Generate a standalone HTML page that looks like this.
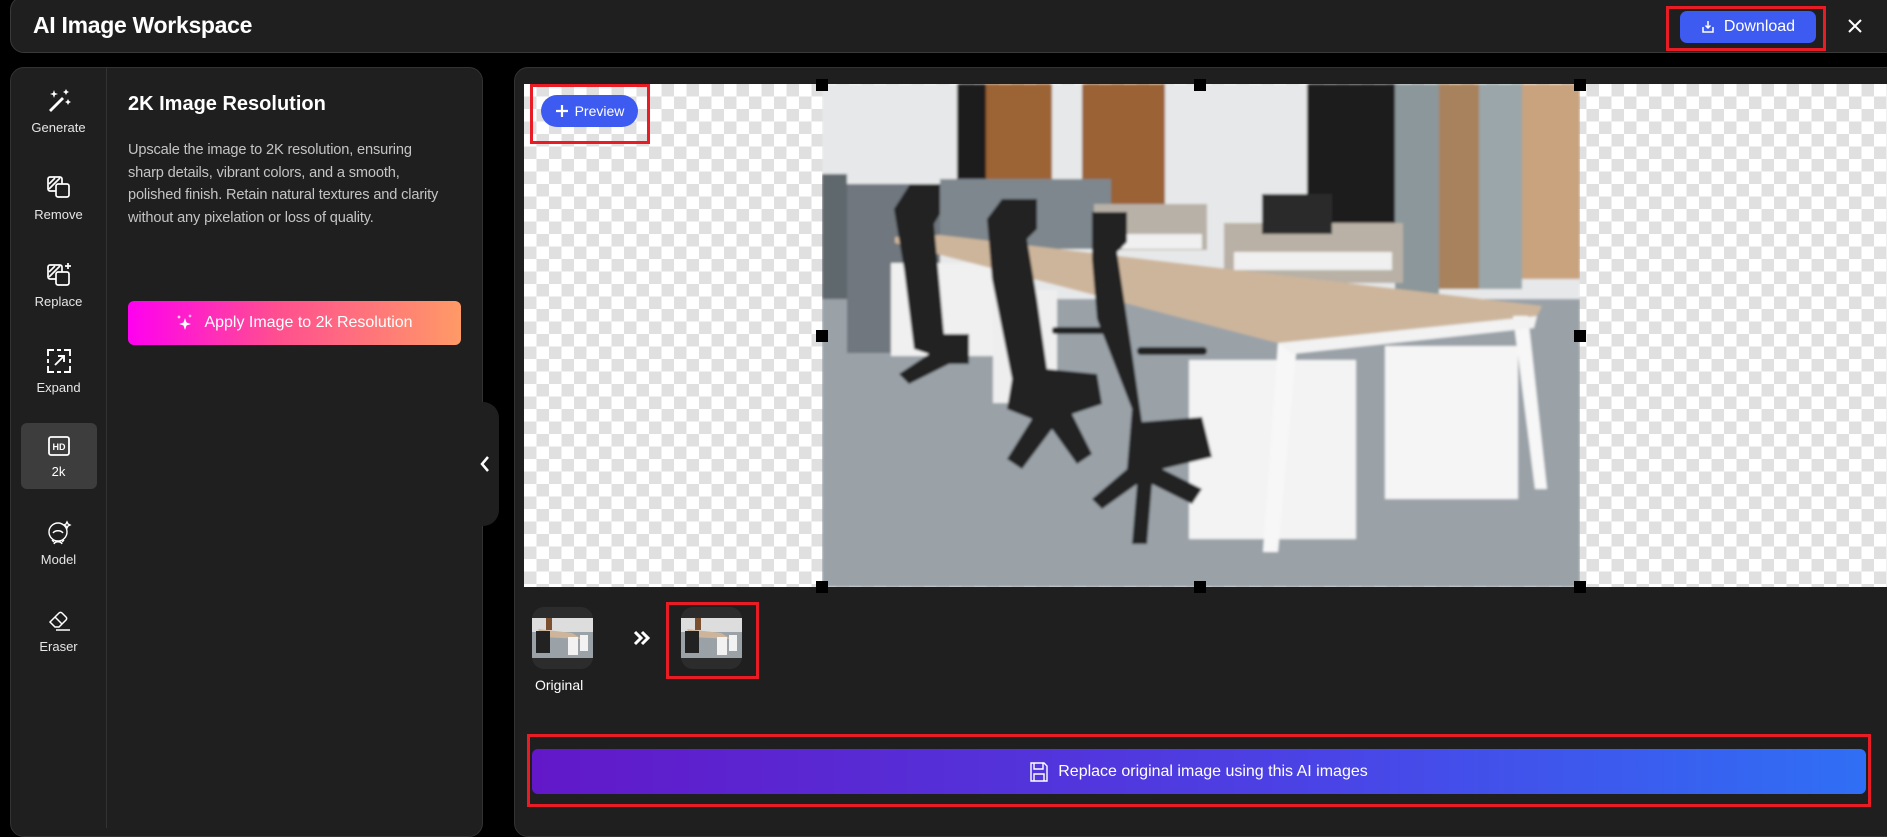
<!DOCTYPE html>
<html><head><meta charset="utf-8">
<style>
*{box-sizing:border-box;margin:0;padding:0}
body{width:1887px;height:818px;background:#000;font-family:"Liberation Sans",sans-serif;position:relative;overflow:hidden;color:#fff}
.abs{position:absolute}
.hdr{left:10px;top:-4px;width:1890px;height:57px;background:#1f1f1f;border:1px solid #3a3a3a;border-radius:14px}
.title{left:33px;top:12px;font-size:23px;font-weight:bold;letter-spacing:-0.3px}
.dl{left:1680px;top:11px;width:136px;height:32px;background:#3d5af1;border-radius:7px;font-size:16px;display:flex;align-items:center;justify-content:center;gap:9px}
.red{border:3px solid #e81c24}
.lp{left:10px;top:67px;width:473px;height:770px;background:#1f1f1f;border:1px solid #333;border-radius:14px}
.div{left:106px;top:68px;width:1px;height:760px;background:#333}
.item{left:20px;width:77px;text-align:center;font-size:13px;color:#e6e6e6}
.item svg{display:block;margin:0 auto 6px}
.rp{left:514px;top:67px;width:1390px;height:770px;background:#1f1f1f;border:1px solid #333;border-radius:14px}
.canvas{left:524px;top:84px;width:1363px;height:503px;background-color:#fff;background-image:linear-gradient(45deg,#e0e0e0 25%,transparent 25%,transparent 75%,#e0e0e0 75%),linear-gradient(45deg,#e0e0e0 25%,transparent 25%,transparent 75%,#e0e0e0 75%);background-size:25px 25px;background-position:0 0,12.5px 12.5px}
.h{width:12px;height:12px;background:#000}
</style></head><body>
<div class="abs hdr"></div>
<div class="abs title">AI Image Workspace</div>
<div class="abs red" style="left:1666px;top:6px;width:160px;height:45px"></div>
<div class="abs dl"><svg width="14" height="14" viewBox="0 0 14 14" fill="none" stroke="#fff" stroke-width="1.5"><path d="M7 1v7M4.5 5.5L7 8l2.5-2.5M2 7v5h10V7"/></svg>Download</div>
<svg class="abs" style="left:1847px;top:18px" width="16" height="16" viewBox="0 0 16 16" stroke="#fff" stroke-width="2"><path d="M2 2l12 12M14 2L2 14"/></svg>

<div class="abs lp"></div>
<div class="abs div"></div>
<div class="abs" style="left:21px;top:423px;width:76px;height:66px;background:#3d3d3d;border-radius:6px"></div>

<div class="abs item" style="top:88px"><svg width="26" height="26" viewBox="0 0 26 26" fill="#fff"><path d="M3 22l13-13 2 2-13 13z"/><path d="M8 2l1 3 3 1-3 1-1 3-1-3-3-1 3-1zM20 1l1 2 2 1-2 1-1 2-1-2-2-1 2-1zM22 11l1 2 2 1-2 1-1 2-1-2-2-1 2-1z"/></svg>Generate</div>
<div class="abs item" style="top:175px"><svg width="26" height="26" viewBox="0 0 26 26" fill="none" stroke="#fff" stroke-width="1.7"><rect x="2" y="2" width="14" height="14" rx="2"/><rect x="10" y="9" width="13" height="13" rx="2" fill="#1f1f1f"/><path d="M3 9l6-6M3 14l11-11"/></svg>Remove</div>
<div class="abs item" style="top:262px"><svg width="26" height="26" viewBox="0 0 26 26" fill="none" stroke="#fff" stroke-width="1.7"><rect x="2" y="3" width="14" height="14" rx="2"/><rect x="10" y="10" width="13" height="13" rx="2" fill="#1f1f1f"/><path d="M3 10l6-6M3 15l11-11M22 1v6M19 4h6"/></svg>Replace</div>
<div class="abs item" style="top:348px"><svg width="26" height="26" viewBox="0 0 26 26" fill="none" stroke="#fff" stroke-width="1.9"><path d="M2 8V2h6M18 2h6v6M24 18v6h-6M8 24H2v-6M11 2h4M2 11v4M24 11v4M11 24h4"/><path d="M9 17l9-9M12 8h6v6"/></svg>Expand</div>
<div class="abs item" style="top:434px;color:#fff"><svg width="24" height="24" viewBox="0 0 24 24"><rect x="2" y="3" width="20" height="18" rx="2" fill="none" stroke="#fff" stroke-width="1.8"/><text x="12" y="16" text-anchor="middle" font-size="9" font-weight="bold" fill="#fff" font-family="Liberation Sans">HD</text></svg>2k</div>
<div class="abs item" style="top:520px"><svg width="26" height="26" viewBox="0 0 26 26" fill="none" stroke="#fff" stroke-width="1.4"><circle cx="12" cy="12" r="9"/><path d="M7 13c2-3 8-3 10 0M8 24c1-3 7-3 8 0M6 20l2 2M18 20l-2 2M21 2l1 2 2 1-2 1-1 2-1-2-2-1 2-1z"/></svg>Model</div>
<div class="abs item" style="top:607px"><svg width="26" height="26" viewBox="0 0 26 26" fill="none" stroke="#fff" stroke-width="1.5"><path d="M4 15l9-9a2 2 0 013 0l4 4a2 2 0 010 3l-7 7H9z M9 10l7 7M10 23h14"/></svg>Eraser</div>

<div class="abs" style="left:128px;top:93px;font-size:20px;font-weight:bold">2K Image Resolution</div>
<div class="abs" style="left:128px;top:139px;white-space:nowrap;font-size:14.6px;letter-spacing:-0.15px;line-height:22.5px;color:#c4c4c4">Upscale the image to 2K resolution, ensuring<br>sharp details, vibrant colors, and a smooth,<br>polished finish. Retain natural textures and clarity<br>without any pixelation or loss of quality.</div>
<div class="abs" style="left:128px;top:301px;width:333px;height:44px;border-radius:6px;background:linear-gradient(90deg,#ff00f0,#ff4f8f 45%,#ff9a66);display:flex;align-items:center;justify-content:center;gap:10px;font-size:16px"><svg width="18" height="18" viewBox="0 0 18 18" fill="#fff"><path d="M9 4l1.5 4.5L15 10l-4.5 1.5L9 16l-1.5-4.5L3 10l4.5-1.5zM3 1l.6 1.4L5 3l-1.4.6L3 5l-.6-1.4L1 3l1.4-.6zM14 0l.5 1.5 1.5.5-1.5.5L14 4l-.5-1.5L12 2l1.5-.5z"/></svg>Apply Image to 2k Resolution</div>

<div class="abs rp"></div>
<div class="abs" style="left:470px;top:402px;width:29px;height:124px;background:#1f1f1f;border-radius:0 16px 16px 0"></div>
<svg class="abs" style="left:479px;top:455px" width="12" height="18" viewBox="0 0 12 18" fill="none" stroke="#fff" stroke-width="2.5"><path d="M9 2L3 9l6 7"/></svg>

<div class="abs canvas"></div>
<svg class="abs" style="left:822px;top:84px" width="758" height="503" viewBox="0 0 758 503">
<defs><filter id="b"><feGaussianBlur stdDeviation="1.2"/></filter></defs>
<g filter="url(#b)">
<rect width="758" height="503" fill="#9aa2a8"/>
<rect width="758" height="215" fill="#e6e8e9"/>
<rect x="135" y="0" width="29" height="95" fill="#1c1c1c"/>
<rect x="164" y="0" width="66" height="95" fill="#9c6436"/>
<rect x="260" y="0" width="83" height="120" fill="#9a6234"/>
<rect x="485" y="0" width="88" height="150" fill="#1d1d1d"/>
<rect x="573" y="0" width="44" height="210" fill="#8b979a"/>
<rect x="617" y="0" width="40" height="205" fill="#a8825c"/>
<rect x="657" y="0" width="43" height="205" fill="#9aa6a9"/>
<rect x="700" y="0" width="58" height="195" fill="#c9a37e"/>
<rect x="118" y="95" width="171" height="70" fill="#7e878d"/>
<rect x="25" y="100" width="93" height="169" fill="#6f777e"/>
<rect x="0" y="90" width="25" height="125" fill="#5f676d"/>
<rect x="272" y="120" width="113" height="46" fill="#b8b1a7"/>
<rect x="402" y="139" width="179" height="60" fill="#b9b1a6"/>
<rect x="440" y="110" width="70" height="40" fill="#2a2a2a"/>
<rect x="69" y="179" width="102" height="93" fill="#f0f0f0"/>
<rect x="171" y="206" width="64" height="113" fill="#eeeeee"/>
<polygon points="73,153 118,151 720,222 715,232 456,259 73,159" fill="#cdb59b"/>
<rect x="412" y="168" width="158" height="18" fill="#f0f0f0"/>
<rect x="300" y="150" width="80" height="15" fill="#f0f0f0"/>
<rect x="367" y="276" width="167" height="179" fill="#f3f3f3"/>
<rect x="563" y="262" width="133" height="153" fill="#f5f5f5"/>
<polygon points="456,259 475,259 456,468 441,468" fill="#f7f7f7"/>
<polygon points="691,232 706,232 725,405 713,405" fill="#f7f7f7"/>
<polygon points="456,259 715,232 712,244 470,270" fill="#f2f2f2"/>
<g fill="#222">
<path d="M88 100h30v30l-6 10 10 110h25l0 30h-20l-40 20-10-10 30-20-15-5-10-80-10-60z"/>
<path d="M180 115h35v30l-10 10 10 60 10 70 50 5 5 30-30 10 20 40-15 10-25-35-30 40-15-10 25-40-25-10 5-30-20-100-5-60z"/>
<path d="M270 128h35v30l-10 10 15 100 10 70 60 -5 10 40-50 12 40 20-10 15-40-20-5 60h-15l5-60-35 25-10-10 35-30 5-60-35-90-5-60z"/>
<rect x="315" y="263" width="70" height="8" rx="4"/>
<rect x="230" y="243" width="60" height="7" rx="3"/>
</g>
</g>
</svg>
<div class="abs h" style="left:816px;top:79px"></div>
<div class="abs h" style="left:1194px;top:79px"></div>
<div class="abs h" style="left:1574px;top:79px"></div>
<div class="abs h" style="left:816px;top:330px"></div>
<div class="abs h" style="left:1574px;top:330px"></div>
<div class="abs h" style="left:816px;top:581px"></div>
<div class="abs h" style="left:1194px;top:581px"></div>
<div class="abs h" style="left:1574px;top:581px"></div>

<div class="abs red" style="left:530px;top:84px;width:120px;height:60px"></div>
<div class="abs" style="left:541px;top:95px;width:97px;height:32px;background:#3d5af1;border-radius:16px;display:flex;align-items:center;justify-content:center;gap:6px;font-size:14px"><svg width="14" height="14" viewBox="0 0 14 14" stroke="#fff" stroke-width="2.2"><path d="M7 1v12M1 7h12"/></svg>Preview</div>

<div class="abs" style="left:532px;top:607px;width:61px;height:62px;background:#2c2c2c;border-radius:12px;overflow:hidden"><svg width="61" height="62" viewBox="0 0 61 62"><rect y="11" width="61" height="40" fill="#9aa2a8"/><rect y="11" width="61" height="14" fill="#ddd"/><rect x="14" y="11" width="6" height="12" fill="#7a5030"/><polygon points="6,22 40,26 50,32 10,30" fill="#cdb59b"/><rect x="4" y="24" width="14" height="22" fill="#222"/><rect x="36" y="30" width="10" height="18" fill="#f2f2f2"/><rect x="48" y="28" width="8" height="16" fill="#f2f2f2"/></svg></div>
<div class="abs" style="left:535px;top:677px;font-size:14px">Original</div>
<svg class="abs" style="left:633px;top:630px" width="18" height="16" viewBox="0 0 18 16" fill="none" stroke="#fff" stroke-width="3"><path d="M2 2l6 6-6 6M9 2l6 6-6 6"/></svg>
<div class="abs red" style="left:666px;top:602px;width:93px;height:77px"></div>
<div class="abs" style="left:681px;top:607px;width:61px;height:62px;background:#2c2c2c;border-radius:12px;overflow:hidden"><svg width="61" height="62" viewBox="0 0 61 62"><rect y="11" width="61" height="40" fill="#9aa2a8"/><rect y="11" width="61" height="14" fill="#ddd"/><rect x="14" y="11" width="6" height="12" fill="#7a5030"/><polygon points="6,22 40,26 50,32 10,30" fill="#cdb59b"/><rect x="4" y="24" width="14" height="22" fill="#222"/><rect x="36" y="30" width="10" height="18" fill="#f2f2f2"/><rect x="48" y="28" width="8" height="16" fill="#f2f2f2"/></svg></div>

<div class="abs red" style="left:527px;top:734px;width:1344px;height:73px"></div>
<div class="abs" style="left:532px;top:749px;width:1334px;height:45px;border-radius:6px;background:linear-gradient(90deg,#6218c8,#4a44e6 60%,#2f6ff5);display:flex;align-items:center;justify-content:center;gap:10px;font-size:16px"><svg width="18" height="20" viewBox="0 0 18 20" fill="none" stroke="#fff" stroke-width="1.4"><path d="M1 1h13l3 3v15H1z M4 1v6h9V1 M4 19v-7h10v7"/></svg>Replace original image using this AI images</div>
</body></html>
